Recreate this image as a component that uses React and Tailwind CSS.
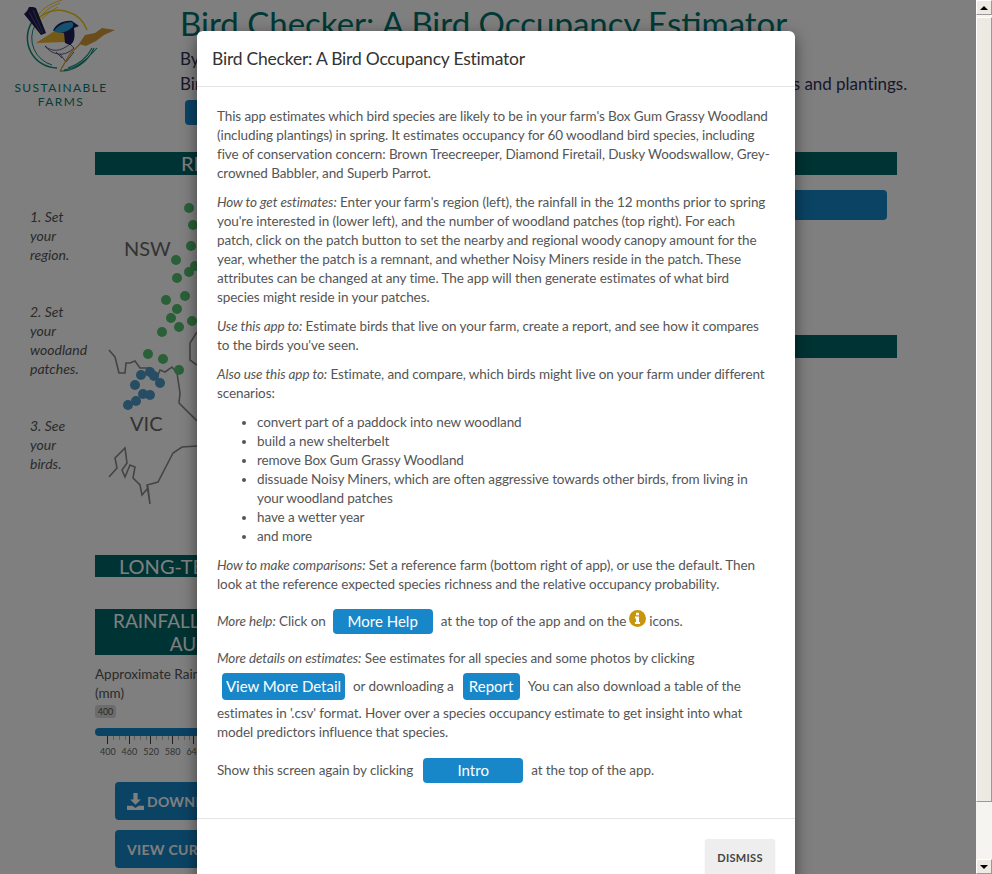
const sans = "font-['Lato','Noto_Sans',sans-serif]";

const greenDots = [
  [89, 18], [93, 35], [91, 56], [76, 70], [95, 76], [89, 82], [77, 88], [85, 106], [66, 110],
  [77, 119], [71, 128], [79, 137], [92, 131], [62, 142], [48, 164], [63, 169], [79, 180],
];
const blueDots = [
  [41, 185], [50, 182], [54, 186], [35, 195], [60, 193], [43, 204], [50, 205], [36, 211], [28, 215],
];

function Logo() {
  return (
    <svg width="120" height="76" viewBox="0 0 120 76" className="block">
      {/* rings */}
      <path d="M40 17 A 30 30 0 0 1 87 30" fill="none" stroke="#f0c814" strokeWidth="1.5" />
      <path d="M38 15 C 44 7 52 3 62 0 M40 17 C 46 10 52 6 60 3 M42 19 C 48 13 54 9 58 7" fill="none" stroke="#f0c814" strokeWidth="0.9" />
      <path d="M32 22 A 30 30 0 0 0 57 68" fill="none" stroke="#0f8a78" strokeWidth="1.5" />
      <path d="M35 25 A 28 28 0 0 0 52 65" fill="none" stroke="#0f8a78" strokeWidth="1" />
      <path d="M60 71 C 74 72 88 62 94 48 M64 70 C 78 68 86 60 97 48 M68 68 C 80 64 88 56 92 48" fill="none" stroke="#0f8a78" strokeWidth="1.1" />
      {/* tail */}
      <path d="M24 14 L27 11 L29 7 L33 7 L36 8 L46 33 L41 35 Z" fill="#1c1c50" />
      <path d="M29 12 L41 33 M33 10 L43 33" stroke="#8a8a8a" strokeWidth="0.5" />
      {/* belly */}
      <path d="M45 46 C 52 52 60 52 70 44 L74 48 C 70 52 64 55 58 54 C 52 53 48 50 45 46 Z" fill="#f8f8f8" stroke="#20205a" strokeWidth="0.7" />
      {/* wing */}
      <path d="M36 43 L53 32 L66 31 L65 42 Z" fill="#e8b42c" />
      {/* head */}
      <path d="M53 31 C 55 24 64 20 72 21 L79 26 L74 28 C 75 36 75 42 70 45 L65 43 L64 33 Z" fill="#20205a" />
      <path d="M54 31 C 57 26 64 22 72 22 C 76 26 70 30 64 32 C 60 33 56 33 54 31 Z" fill="#2aa4e0" />
      {/* legs */}
      <path d="M60 54 L66 62 L74 52 M56 52 L62 58" fill="none" stroke="#20205a" strokeWidth="0.7" />
      {/* wheat */}
      <path d="M60 71 L70 54 L80 44" fill="none" stroke="#e0a030" strokeWidth="1.3" />
      <path d="M79 44 L85 35 L95 33 L102 28 L115 30 L104 35 L96 41 L86 46 Z" fill="#d49a38" />
    </svg>
  );
}

function MapPlot() {
  return (
    <svg width="102" height="345" viewBox="-5 -15 102 345" className="block">
      <path d="M9 160 L15 167 L19 183 L25 183 L26 173 L30 173 L35 171 L40 178 L50 178 L58 185 L60 180 L65 182 L72 177 L77 183 L80 203 L79 213 L97 231" fill="none" stroke="#888" strokeWidth="1.6" />
      <path d="M97 142 L90 153 L90 170 L97 175" fill="none" stroke="#888" strokeWidth="1.6" />
      <path d="M9 287 L17 278 L15 268 L25 258 L27 273 L22 280 L25 287 L30 275 L35 277 L33 288 L40 295 L42 305 L48 298 L50 314 L47 295 L58 292 L73 263 L82 257 L97 256" fill="none" stroke="#888" strokeWidth="1.6" />
      {greenDots.map(([x, y]) => (
        <circle key={`${x}-${y}`} cx={x} cy={y} r="5" fill="#54c070" />
      ))}
      {blueDots.map(([x, y]) => (
        <circle key={`${x}-${y}`} cx={x} cy={y} r="5" fill="#4c9ac8" />
      ))}
      <text x="24" y="66" fontSize="20" fill="#666" fontFamily="Lato, sans-serif">NSW</text>
      <text x="30" y="241" fontSize="20" fill="#666" fontFamily="Lato, sans-serif">VIC</text>
    </svg>
  );
}

function Background() {
  return (
    <div className={`h-full w-full bg-white text-[#555] ${sans}`}>
      {/* Header */}
      <div className="flex h-[152px]">
        <div className="w-[180px] shrink-0">
          <Logo />
          <div className="ml-[14px] mt-[5px] w-[94px] text-center text-[12px] leading-[14px] tracking-[1.4px] text-[#0f7a70]">
            SUSTAINABLE
            <br />
            FARMS
          </div>
        </div>
        <div className="whitespace-nowrap">
          <div className="h-[46px] text-[33px] leading-[46px] text-[#00726b]">Bird Checker: A Bird Occupancy Estimator</div>
          <div className="text-[17px] leading-[25px] text-[#30305a]">By Sustainable Farms</div>
          <div className="text-[17px] leading-[25px] tracking-[-0.02px] text-[#30305a]">Bird Checker estimates the birds living in your Box Gum Grassy Woodland remnants and plantings.</div>
          <div className="ml-[5px] mt-[4px] h-[25px] w-[100px] rounded-[4px] bg-[#1787c9]" />
        </div>
      </div>

      {/* Region bar */}
      <div className="ml-[95px] mr-[79px] h-[23px] bg-[#006666] pl-[86px] text-[20px] leading-[23px] text-white">REGION</div>

      <div className="flex h-[381px]">
        <div className="w-[95px] shrink-0 pl-[30px] pt-[32px] text-[14px] italic leading-[19px] text-[#555]">
          <p>1. Set<br />your<br />region.</p>
          <p className="mt-[38px]">2. Set<br />your<br />woodland<br />patches.</p>
          <p className="mt-[38px]">3. See<br />your<br />birds.</p>
        </div>
        <div className="w-[102px] shrink-0">
          <MapPlot />
        </div>
        <div className="flex-1 pr-[89px]">
          <div className="mt-[15px] h-[30px] rounded-[4px] bg-[#1787c9]" />
          <div className="mr-[-10px] mt-[115px] h-[23px] bg-[#006666]" />
        </div>
      </div>

      <div className="ml-[95px] mt-[-1px] h-[22px] w-[300px] bg-[#006666] pl-[24px] text-[20px] leading-[22px] text-white">LONG-TERM</div>

      <div className="ml-[95px] mt-[32px] flex h-[46px] w-[190px] items-center justify-center bg-[#006666] text-center text-[19px] leading-[23px] text-white">
        RAINFALL (MMM)
        <br />
        AUG
      </div>

      <div className="ml-[95px] mt-[10px] text-[13.5px] leading-[19px]">
        Approximate Rainfall
        <br />
        (mm)
      </div>
      <div className="ml-[95px] mt-[2px] w-[21px] rounded-[3px] bg-[#d8d8d8] text-center text-[9px] leading-[13px]">400</div>
      <div className="ml-[95px] mt-[10px] h-[8px] w-[200px] rounded-[4px] bg-[#1787c9]" />
      <div className="ml-[107px] flex h-[9px] w-[120px] items-start">
        {[0, 1, 2, 3, 4, 5].map((n) => (
          <div key={n} className="flex w-[21.6px] shrink-0 justify-between pr-[3px]">
            <span className="h-[8px] w-px bg-[#444]" />
            <span className="h-[4px] w-px bg-[#bbb]" />
            <span className="h-[4px] w-px bg-[#bbb]" />
            <span className="h-[4px] w-px bg-[#bbb]" />
          </div>
        ))}
      </div>
      <div className="ml-[95px] flex text-[9px] leading-[14px] text-[#666]">
        {["400", "460", "520", "580", "640"].map((label) => (
          <span key={label} className="w-[21.6px] shrink-0 pl-[5px] text-left">{label}</span>
        ))}
      </div>

      <div className="ml-[115px] mt-[23px] flex h-[38px] w-[220px] items-center gap-[3px] rounded-[4px] bg-[#1787c9] pl-[12px] text-[14px] font-bold tracking-[0.3px] text-white">
        <svg width="17" height="17" viewBox="0 0 16 16" fill="currentColor">
          <path d="M6 0h4v6h3l-5 5-5-5h3zM0 12h5l3 2 3-2h5v4H0zM12 14h1v1h-1zM14 14h1v1h-1z" />
        </svg>
        DOWNLOAD
      </div>
      <div className="ml-[115px] mt-[10px] flex h-[38px] w-[220px] items-center rounded-[4px] bg-[#1787c9] pl-[12px] text-[14px] font-bold tracking-[0.3px] text-white">
        VIEW CURRENT
      </div>
    </div>
  );
}

function HelpButton({ children, className }) {
  return (
    <span className={`mr-[8px] inline-flex items-center justify-center rounded-[4px] bg-[#1787c9] text-[15px] tracking-normal text-white ${className}`}>
      {children}
    </span>
  );
}

function InfoIcon() {
  return (
    <svg width="17" height="17" viewBox="0 0 16 16" className="relative top-[-3px] mx-[3px] shrink-0">
      <circle cx="8" cy="8" r="8" fill="#c8960c" />
      <path d="M6.6 2.6h2.8v2.3H6.6zM5.6 6.2h3.8v5h1v1.9H5.6v-1.9h1v-3.1h-1z" fill="#fff" />
    </svg>
  );
}

function Modal() {
  return (
    <div className={`absolute left-[197px] top-[31px] w-[598px] rounded-t-[6px] bg-white text-[13.5px] leading-[19px] tracking-[-0.09px] text-[#555] shadow-[0_5px_15px_rgba(0,0,0,0.5)] ${sans}`}>
      <div className="flex h-[56px] items-center border-b border-[#e5e5e5] pl-[15px] text-[17.5px] tracking-[-0.22px] text-[#333]">
        Bird Checker: A Bird Occupancy Estimator
      </div>
      <div className="h-[731px] whitespace-nowrap p-[20px]">
        <p className="mb-[10px]">
          This app estimates which bird species are likely to be in your farm's Box Gum Grassy Woodland
          <br />
          (including plantings) in spring. It estimates occupancy for 60 woodland bird species, including
          <br />
          five of conservation concern: Brown Treecreeper, Diamond Firetail, Dusky Woodswallow, Grey-
          <br />
          crowned Babbler, and Superb Parrot.
        </p>
        <p className="mb-[10px]">
          <em>How to get estimates:</em> Enter your farm's region (left), the rainfall in the 12 months prior to spring
          <br />
          you're interested in (lower left), and the number of woodland patches (top right). For each
          <br />
          patch, click on the patch button to set the nearby and regional woody canopy amount for the
          <br />
          year, whether the patch is a remnant, and whether Noisy Miners reside in the patch. These
          <br />
          attributes can be changed at any time. The app will then generate estimates of what bird
          <br />
          species might reside in your patches.
        </p>
        <p className="mb-[10px]">
          <em>Use this app to:</em> Estimate birds that live on your farm, create a report, and see how it compares
          <br />
          to the birds you've seen.
        </p>
        <p className="mb-[10px]">
          <em>Also use this app to:</em> Estimate, and compare, which birds might live on your farm under different
          <br />
          scenarios:
        </p>
        <ul className="mb-[10px] list-disc pl-[40px]">
          <li>convert part of a paddock into new woodland</li>
          <li>build a new shelterbelt</li>
          <li>remove Box Gum Grassy Woodland</li>
          <li>
            dissuade Noisy Miners, which are often aggressive towards other birds, from living in
            <br />
            your woodland patches
          </li>
          <li>have a wetter year</li>
          <li>and more</li>
        </ul>
        <p className="mb-[10px]">
          <em>How to make comparisons:</em> Set a reference farm (bottom right of app), or use the default. Then
          <br />
          look at the reference expected species richness and the relative occupancy probability.
        </p>
        <div className="mb-[10px] flex h-[35px] items-center">
          <span><em>More help:</em> Click on</span>
          <HelpButton className="ml-[7px] h-[25px] w-[100px]">More Help</HelpButton>
          <span>at the top of the app and on the</span>
          <InfoIcon />
          <span>icons.</span>
        </div>
        <p>
          <em>More details on estimates:</em> See estimates for all species and some photos by clicking
        </p>
        <div className="flex h-[36px] items-center">
          <span className="mx-[5px] inline-flex h-[27px] w-[123px] items-center justify-center rounded-[4px] bg-[#1787c9] text-[15px] tracking-normal text-white">View More Detail</span>
          <span className="ml-[3px]">or downloading a</span>
          <HelpButton className="ml-[9px] h-[27px] w-[57px]">Report</HelpButton>
          <span>You can also download a table of the</span>
        </div>
        <p className="mb-[10px]">
          estimates in '.csv' format. Hover over a species occupancy estimate to get insight into what
          <br />
          model predictors influence that species.
        </p>
        <div className="flex h-[37px] items-center">
          <span>Show this screen again by clicking</span>
          <HelpButton className="ml-[10px] h-[25px] w-[100px]">Intro</HelpButton>
          <span>at the top of the app.</span>
        </div>
      </div>
      <div className="flex justify-end border-t border-[#e5e5e5] px-[20px] pt-[20px] pb-[8px]">
        <button className="h-[36px] w-[70px] rounded-[2px] bg-[#eeeeee] text-[11px] font-bold tracking-[0.3px] text-[#444] shadow-[0_1px_1px_rgba(0,0,0,0.2)]">
          DISMISS
        </button>
      </div>
    </div>
  );
}

function Scrollbar() {
  return (
    <div className="flex h-full w-[16px] shrink-0 flex-col bg-[#f6f4f1]">
      <div className="flex h-[15px] items-center justify-center border border-t-white border-l-white border-r-[#999] border-b-[#999] bg-[#ede9e3]">
        <span className="h-0 w-0 border-x-[4px] border-b-[4px] border-x-transparent border-b-black" />
      </div>
      <div className="mt-[2px] h-[785px] border border-t-white border-l-white border-r-[#999] border-b-[#999] bg-[#ede9e3]" />
      <div className="flex-1" />
      <div className="flex h-[15px] items-center justify-center border border-t-white border-l-white border-r-[#999] border-b-[#999] bg-[#ede9e3]">
        <span className="h-0 w-0 border-x-[4px] border-t-[4px] border-x-transparent border-t-black" />
      </div>
    </div>
  );
}

export default function App() {
  return (
    <div className="flex h-[874px] w-[992px] overflow-hidden">
      <div className="relative h-full w-[976px] overflow-hidden">
        <Background />
        <div className="absolute inset-0 bg-black/50" />
        <Modal />
      </div>
      <Scrollbar />
    </div>
  );
}
